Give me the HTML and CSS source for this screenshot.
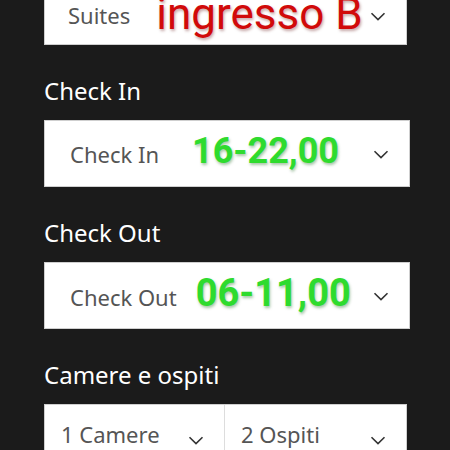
FILE: index.html
```html
<!DOCTYPE html>
<html>
<head>
<meta charset="utf-8">
<link rel="stylesheet" href="styles.css">
</head>
<body>
<div class="form">
  <div class="box box-top">
    <span class="val val-suites">Suites</span>
    <span class="red">ingresso B</span>
    <svg class="chev chev-top" width="16" height="9" viewBox="0 0 16 9"><path d="M1.5 1.2 L8 7.6 L14.5 1.2" fill="none" stroke="#333" stroke-width="1.6"/></svg>
  </div>

  <div class="label">Check In</div>
  <div class="box box-wide">
    <span class="val">Check In</span>
    <span class="green green-in">16-22,00</span>
    <svg class="chev chev-mid" width="16" height="9" viewBox="0 0 16 9"><path d="M1.5 1.2 L8 7.6 L14.5 1.2" fill="none" stroke="#333" stroke-width="1.6"/></svg>
  </div>

  <div class="label">Check Out</div>
  <div class="box box-wide">
    <span class="val">Check Out</span>
    <span class="green green-out">06-11,00</span>
    <svg class="chev chev-mid" width="16" height="9" viewBox="0 0 16 9"><path d="M1.5 1.2 L8 7.6 L14.5 1.2" fill="none" stroke="#333" stroke-width="1.6"/></svg>
  </div>

  <div class="label">Camere e ospiti</div>
  <div class="box box-split">
    <div class="half half-left">
      <span class="val">1 Camere</span>
      <svg class="chev chev-bot" width="16" height="9" viewBox="0 0 16 9"><path d="M1.5 1.2 L8 7.6 L14.5 1.2" fill="none" stroke="#333" stroke-width="1.6"/></svg>
    </div>
    <div class="half half-right">
      <span class="val">2 Ospiti</span>
      <svg class="chev chev-bot" width="16" height="9" viewBox="0 0 16 9"><path d="M1.5 1.2 L8 7.6 L14.5 1.2" fill="none" stroke="#333" stroke-width="1.6"/></svg>
    </div>
  </div>
</div>
</body>
</html>
```

FILE: styles.css
```css
html, body {
  margin: 0;
  padding: 0;
  background: #1b1b1b;
  height: 100%;
  overflow: hidden;
}

.form {
  padding-left: 44px;
  font-family: "Noto Sans", "Open Sans", sans-serif;
}

.box {
  background: #ffffff;
  box-sizing: border-box;
  display: flex;
  align-items: baseline;
  height: 67px;
  padding-top: 11px;
  padding-right: 20px;
  border: 1px solid #cfcfcf;
}

.box-top {
  width: 363px;
  margin-top: -22px;
  align-items: flex-start;
  padding-top: 0;
}

.box-wide {
  width: 366px;
  padding-left: 25px;
}

.val {
  font-size: 22px;
  line-height: 30px;
  color: #555555;
}

.val-suites {
  margin-left: 23px;
  margin-top: 21px;
}

.red {
  font-family: Roboto, "Liberation Sans", sans-serif;
  font-size: 44px;
  line-height: 44px;
  color: #d10a0a;
  margin-left: 26px;
  margin-top: 13px;
  text-shadow: 1px 2px 3px rgba(90, 0, 0, 0.35);
}

.green {
  font-family: Roboto, "Liberation Sans", sans-serif;
  font-weight: 700;
  font-size: 38px;
  line-height: 38px;
  color: #2edb2e;
  text-shadow: 1px 2px 3px rgba(0, 90, 0, 0.35);
}

.green-in {
  font-size: 36px;
  margin-left: 33px;
}

.green-out {
  margin-left: 19px;
}

.chev {
  display: block;
  margin-left: auto;
  align-self: flex-start;
  flex: none;
}

.chev-top {
  margin-top: 33px;
}

.chev-mid {
  margin-top: 18px;
}

.label {
  color: #ffffff;
  font-size: 24px;
  line-height: 32px;
  margin-top: 30px;
  margin-bottom: 13px;
}

.box-split {
  width: 363px;
  height: 80px;
  padding: 0;
  align-items: stretch;
}

.half {
  flex: 1;
  display: flex;
  align-items: baseline;
  padding-top: 14px;
  padding-left: 16px;
  padding-right: 20px;
}

.half-left {
  flex: none;
  width: 180px;
  box-sizing: border-box;
  border-right: 1px solid #dddddd;
}

.chev-bot {
  margin-top: 17px;
}
```
